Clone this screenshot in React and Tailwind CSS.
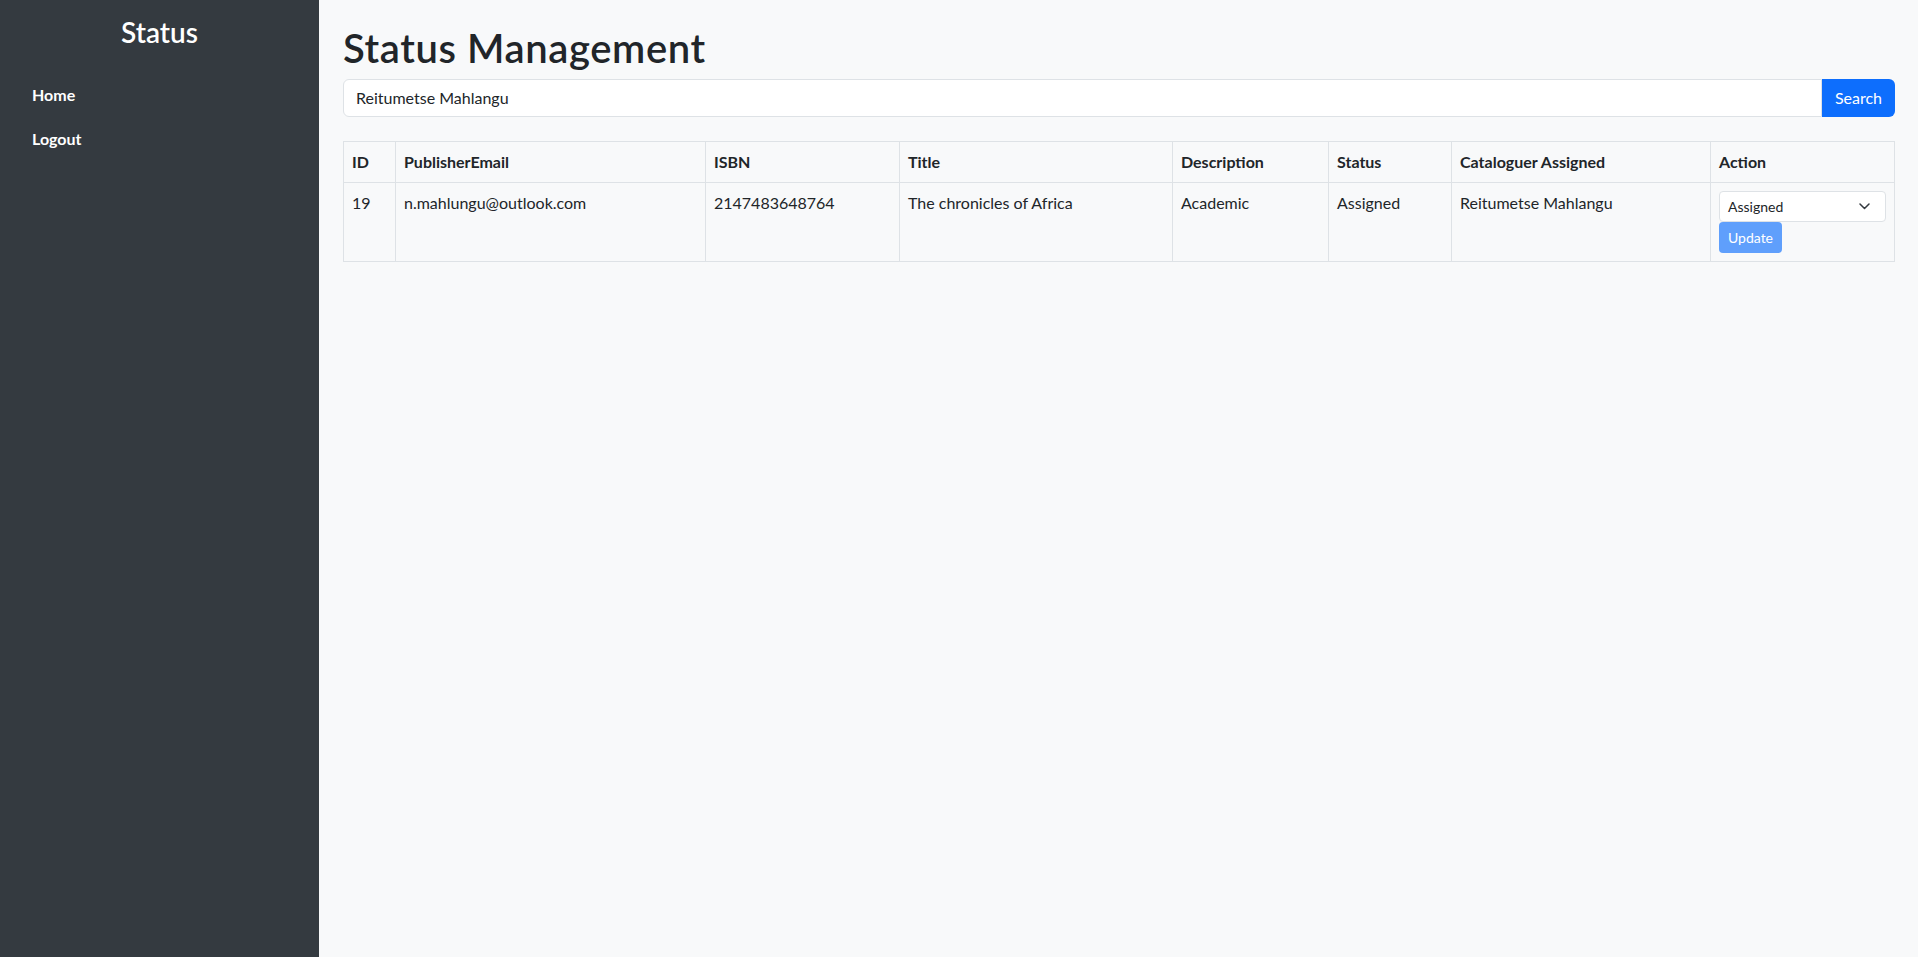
import React from "react";

const cols = [
  { label: "ID", w: "w-[52px]" },
  { label: "PublisherEmail", w: "w-[310px]" },
  { label: "ISBN", w: "w-[194px]" },
  { label: "Title", w: "w-[273px]" },
  { label: "Description", w: "w-[156px]" },
  { label: "Status", w: "w-[123px]" },
  { label: "Cataloguer Assigned", w: "w-[259px]" },
  { label: "Action", w: "w-[184px]" },
];

const row = ["19", "n.mahlungu@outlook.com", "2147483648764", "The chronicles of Africa", "Academic", "Assigned", "Reitumetse Mahlangu"];

export default function App() {
  return (
    <div className="flex h-[957px] w-full font-['Lato',sans-serif] text-[#212529]">
      <aside className="w-[319px] shrink-0 bg-[#343a40] p-4 text-white">
        <h3 className="text-center text-[28px] font-semibold leading-[1.2]">Status</h3>
        <nav className="mt-[25px] flex flex-col gap-1">
          <a className="px-4 py-2 text-base font-bold leading-6 text-white">Home</a>
          <a className="px-4 py-2 text-base font-bold leading-6 text-white">Logout</a>
        </nav>
      </aside>
      <main className="flex-1 bg-[#f8f9fa] px-6 pt-6">
        <h1 className="mb-[7px] text-[40px] font-semibold leading-[48px] tracking-[0.6px]">Status Management</h1>
        <div className="mb-6 flex h-[38px]">
          <input
            className="min-w-0 flex-1 rounded-l-md border border-[#dee2e6] bg-white px-3 text-base text-[#212529] outline-none"
            defaultValue="Reitumetse Mahlangu"
          />
          <button className="w-[73px] rounded-r-md bg-[#0d6efd] text-base text-white">Search</button>
        </div>
        <table className="w-full table-fixed border-collapse border border-[#dee2e6] text-base">
          <thead>
            <tr>
              {cols.map((c) => (
                <th key={c.label} className={`${c.w} border border-[#dee2e6] p-2 text-left font-bold leading-6`}>
                  {c.label}
                </th>
              ))}
            </tr>
          </thead>
          <tbody>
            <tr>
              {row.map((v, i) => (
                <td key={i} className="border border-[#dee2e6] p-2 align-top leading-6">
                  {v}
                </td>
              ))}
              <td className="border border-[#dee2e6] p-2 align-top">
                <div className="flex h-[31px] w-full items-center justify-between rounded border border-[#dee2e6] bg-white pl-2 pr-[15px] text-sm leading-[21px]">
                  <span>Assigned</span>
                  <svg width="11" height="7" viewBox="0 0 11 7" fill="none">
                    <path d="M1 1l4.5 4.5L10 1" stroke="#343a40" strokeWidth="1.5" strokeLinecap="round" strokeLinejoin="round" />
                  </svg>
                </div>
                <button className="block h-[31px] w-[63px] rounded bg-[#5f9ffc] text-sm leading-[21px] text-white">Update</button>
              </td>
            </tr>
          </tbody>
        </table>
      </main>
    </div>
  );
}
